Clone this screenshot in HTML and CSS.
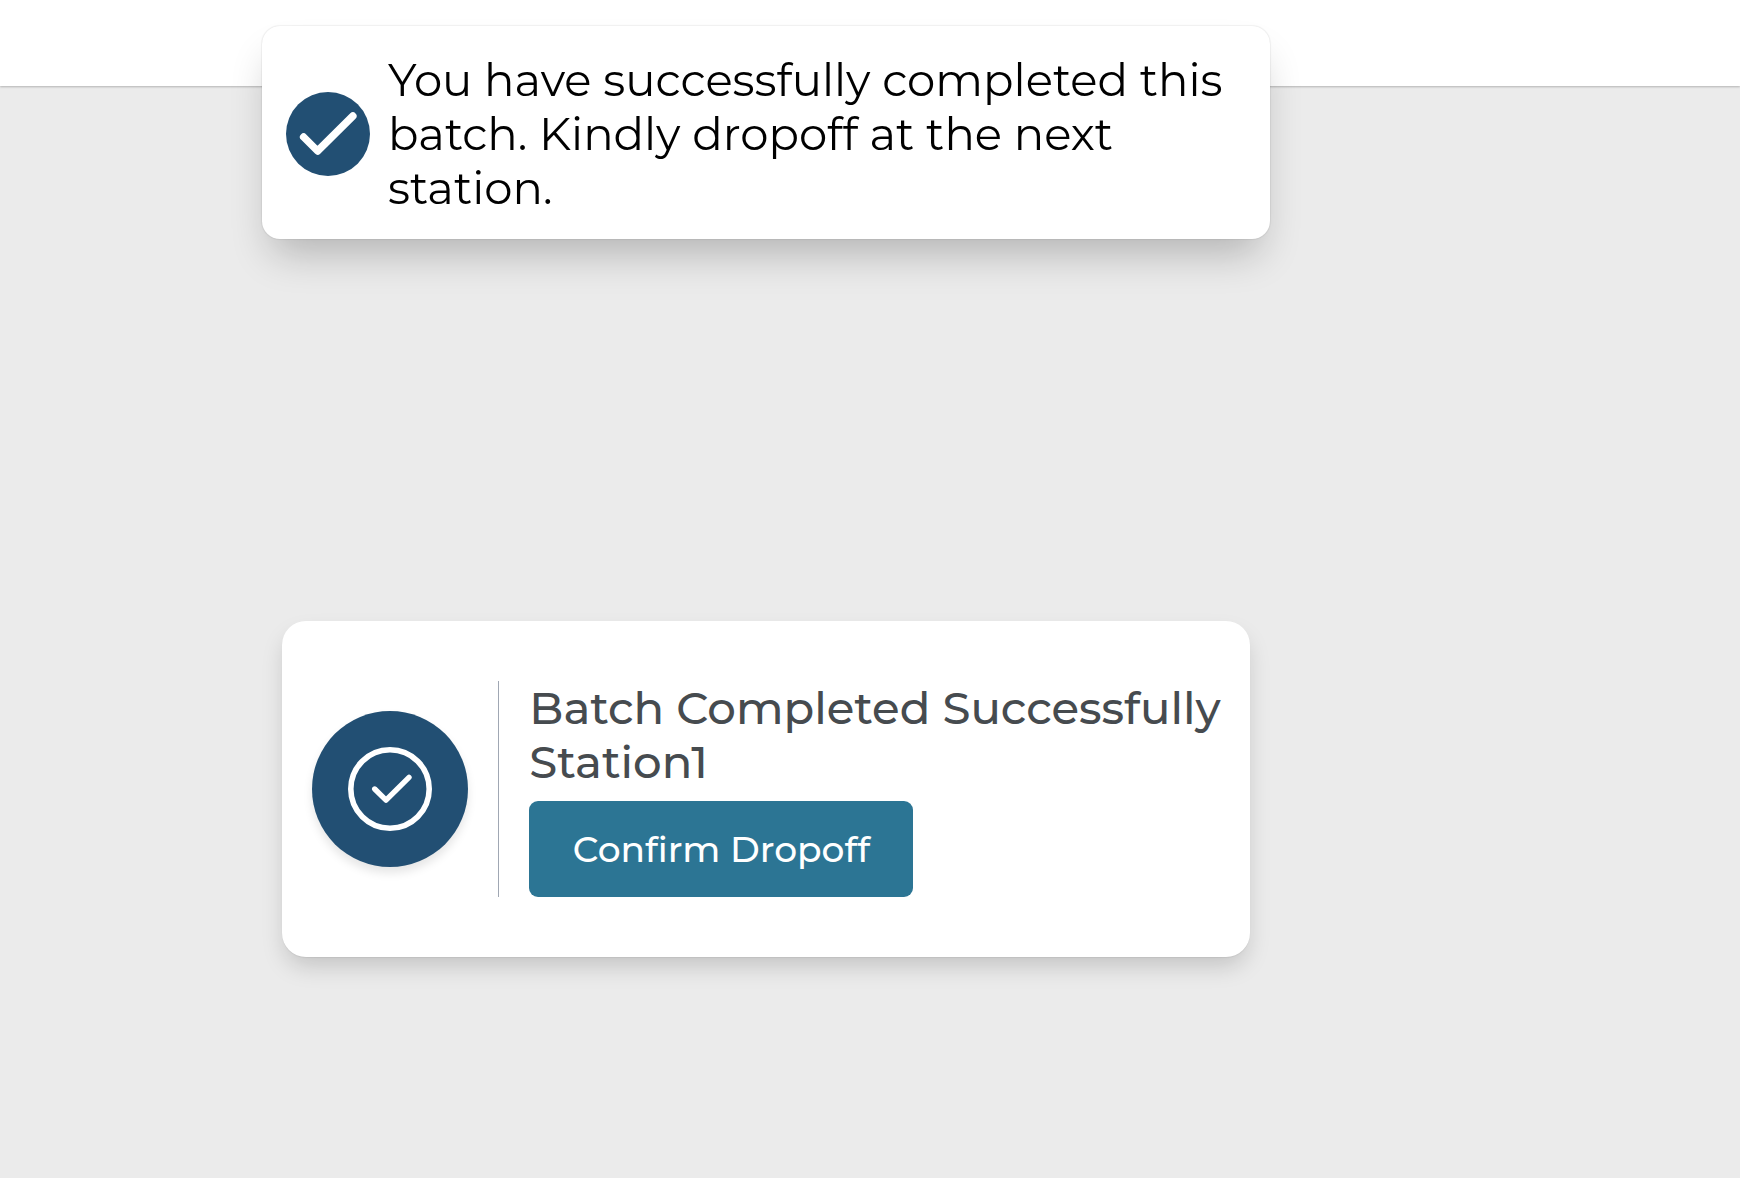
FILE: index.html
```html
<!DOCTYPE html>
<html lang="en">
<head>
  <meta charset="UTF-8">
  <meta name="viewport" content="width=device-width, initial-scale=1.0">
  <title>Batch Completed</title>
  <link rel="stylesheet" href="styles.css">
</head>
<body>
  <header class="topbar"></header>

  <main class="page">
    <section class="card">
      <div class="card__icon">
        <svg width="84" height="84" viewBox="0 0 84 84" fill="none" stroke="currentColor" aria-hidden="true">
          <circle cx="42" cy="42" r="39.2" stroke-width="5.6"/>
          <path d="M26.7 42L38 53.2L61 30.3" stroke-width="5.4" stroke-linecap="round" stroke-linejoin="round"/>
        </svg>
      </div>
      <div class="card__body">
        <h1 class="card__title">Batch Completed Successfully</h1>
        <p class="card__station">Station1</p>
        <button class="card__button" type="button">Confirm Dropoff</button>
      </div>
    </section>
  </main>

  <div class="toast-area">
    <div class="toast" role="status">
      <svg class="toast__icon" viewBox="0 0 84 84" fill="none" aria-hidden="true">
        <circle cx="42" cy="42" r="42" fill="#224f73"/>
        <path d="M17.6 45L31.6 59L66.9 24" stroke="#fff" stroke-width="7.4" stroke-linecap="round" stroke-linejoin="round"/>
      </svg>
      <p class="toast__text">You have successfully completed this batch. Kindly dropoff at the next station.</p>
    </div>
  </div>
</body>
</html>
```

FILE: styles.css
```css
* {
  box-sizing: border-box;
  margin: 0;
  padding: 0;
}

body {
  font-family: Montserrat, Inter, sans-serif;
  font-size: 45px;
  line-height: 54px;
  background-color: #ebebeb;
  color: #000;
  min-height: 100vh;
}

.topbar {
  height: 86px;
  background-color: #fff;
  box-shadow: 0 1px 2px rgba(0, 0, 0, 0.24);
}

.page {
  display: flex;
  justify-content: center;
  padding: 535px 208px 60px 0;
}

.card {
  display: flex;
  align-items: center;
  max-width: 100%;
  padding: 60px 29px 60px 30px;
  background-color: #fff;
  border-radius: 24px;
  box-shadow: 0 1px 1px rgba(0, 0, 0, 0.06), 0 12px 24px -4px rgba(0, 0, 0, 0.18);
}

.card__icon {
  display: flex;
  flex-shrink: 0;
  align-items: center;
  justify-content: center;
  width: 156px;
  height: 156px;
  margin-right: 30px;
  border-radius: 50%;
  background-color: #224f73;
  color: #fff;
  box-shadow: 0 6px 10px rgba(0, 0, 0, 0.1);
}

.card__body {
  padding-left: 30px;
  border-left: 1px solid #a0a7b3;
  color: #464b4f;
}

.card__title,
.card__station {
  font-size: 45px;
  font-weight: 500;
}

.card__button {
  height: 96px;
  margin-top: 12px;
  padding: 0 42px;
  display: block;
  min-width: 384px;
  border: none;
  border-radius: 9px;
  background-color: #2c7594;
  color: #fff;
  font-family: inherit;
  font-size: 36px;
  font-weight: 500;
  cursor: pointer;
}

.card__button:hover {
  background-color: #224f73;
}

/* Notification shown over the page */
.toast-area {
  position: fixed;
  top: 26px;
  left: 0;
  right: 208px;
  display: flex;
  justify-content: center;
}

.toast {
  display: flex;
  align-items: center;
  width: 100%;
  max-width: 1008px;
  padding: 27px 24px 24px;
  background-color: #fff;
  border-radius: 18px;
  box-shadow: 0 0 2px rgba(0, 0, 0, 0.2), 0 24px 40px -10px rgba(0, 0, 0, 0.24);
}

.toast__icon {
  flex-shrink: 0;
  width: 84px;
  height: 84px;
  margin-right: 18px;
}

.toast__text {
  flex: 1;
}
```
